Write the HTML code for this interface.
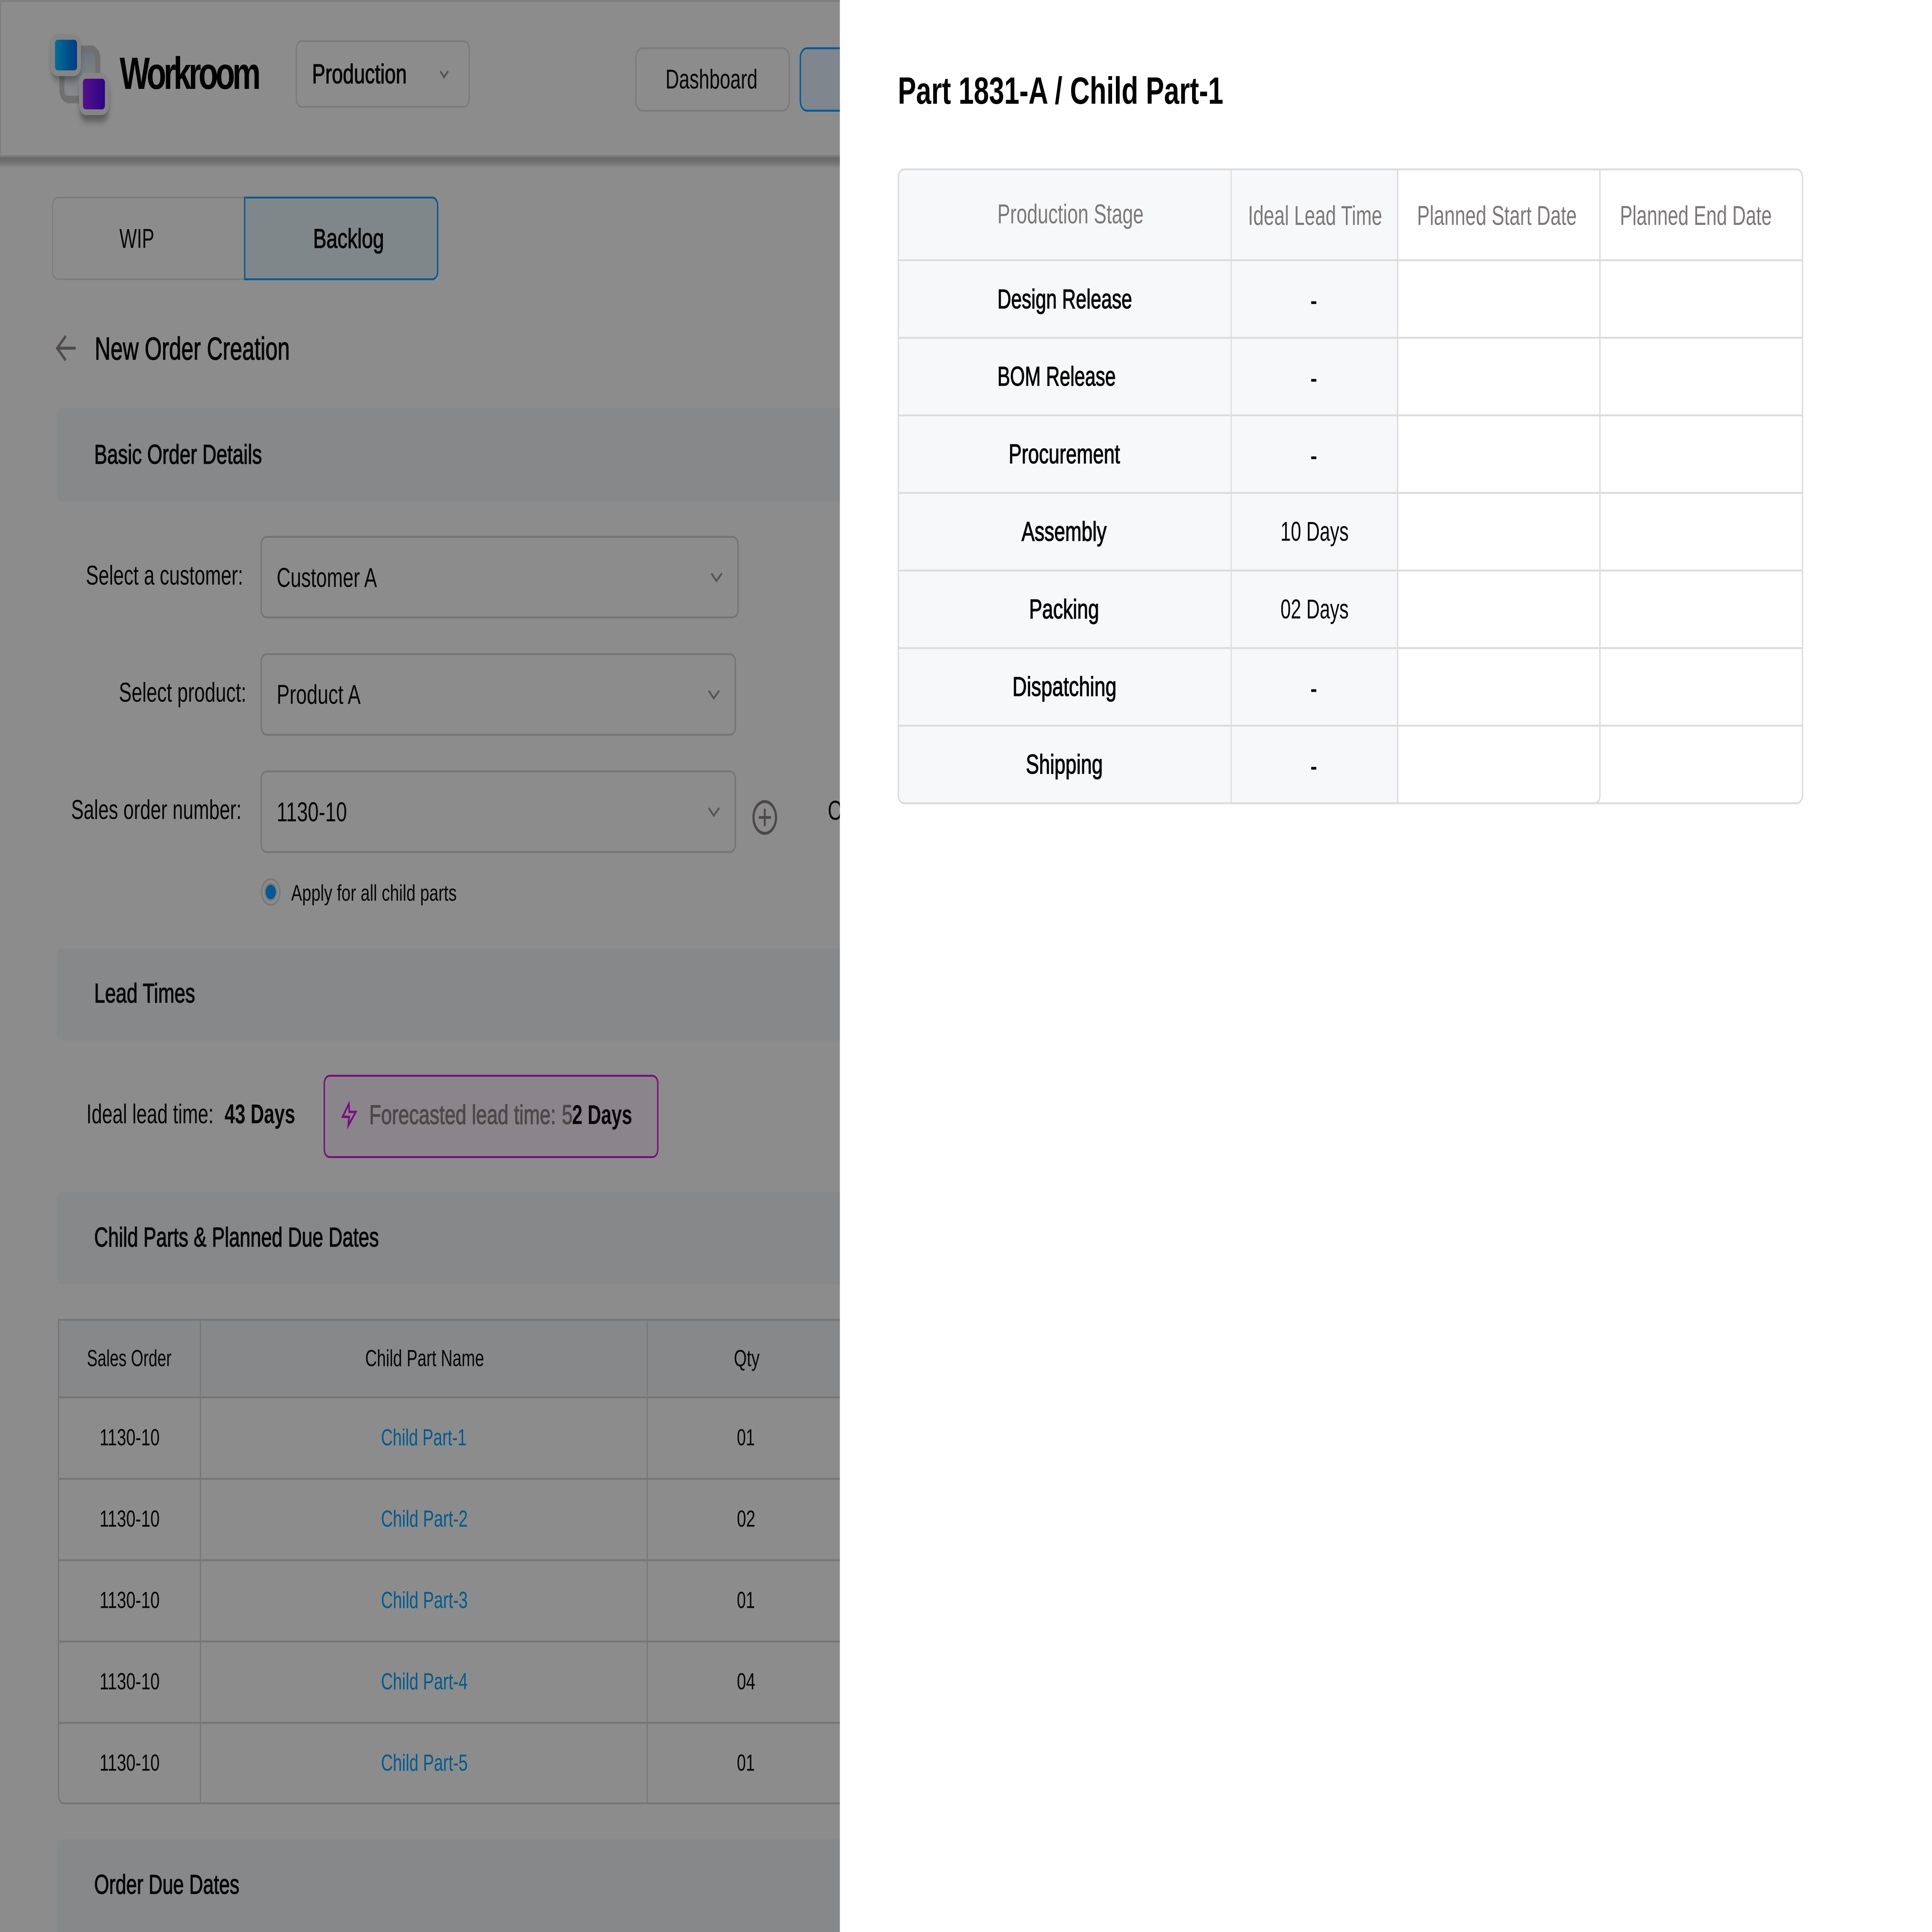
<!DOCTYPE html>
<html lang="en">
<head>
<meta charset="utf-8">
<title>Workroom - Part 1831-A / Child Part-1</title>
<style>
html,body{margin:0;padding:0;background:#fff;width:100%;height:100%;overflow:hidden}
svg{display:block;position:fixed;left:0;top:0;width:100vw;height:100vh}
text{font-family:"Liberation Sans",Arial,sans-serif;fill:#060606}
.m{stroke:#060606;stroke-width:1.6px}
.b{font-weight:700}
.lnk{fill:#005a8e}
.hd{fill:#7c7878}
.line{fill:#dcdcdc}
.gl{fill:#767676}
</style>
</head>
<body>
<svg xmlns="http://www.w3.org/2000/svg" viewBox="0 0 7200 5105" preserveAspectRatio="none">
<defs>
<linearGradient id="gBlue" x1="0" x2="1" y1="0" y2="0"><stop offset="0" stop-color="#006f97"/><stop offset="1" stop-color="#003a82"/></linearGradient>
<linearGradient id="gPur" x1="0" x2="1" y1="0" y2="0"><stop offset="0" stop-color="#55118a"/><stop offset="1" stop-color="#2e0288"/></linearGradient>
<linearGradient id="gBack" x1="0" x2="0" y1="0" y2="1"><stop offset="0" stop-color="#6f7580"/><stop offset="1" stop-color="#878a8d"/></linearGradient>
<linearGradient id="gShadow" x1="0" x2="0" y1="0" y2="1"><stop offset="0" stop-color="#6a6a6a"/><stop offset=".35" stop-color="#6e6e6e"/><stop offset="1" stop-color="#8c8c8c"/></linearGradient>
<filter id="blur" x="-50%" y="-50%" width="200%" height="200%"><feGaussianBlur stdDeviation="9"/></filter>
</defs>

<!-- dimmed page -->
<rect width="3130" height="5105" fill="#8c8c8c"/>

<!-- top bar -->
<rect x="0" y="415" width="3130" height="30" fill="url(#gShadow)"/>
<rect x="0" y="0" width="3130" height="5" fill="#7e7e7e"/>
<rect x="0" y="0" width="4" height="412" fill="#7e7e7e"/>
<rect x="0" y="410" width="3130" height="5" fill="#7b7b7b"/>

<!-- logo -->
<rect x="221" y="120" width="153" height="153" rx="35" fill="#707070"/>
<rect x="240" y="140" width="115" height="113" rx="13" fill="url(#gBack)"/>
<rect x="193" y="105" width="106" height="108" rx="26" fill="#000" opacity=".3" filter="url(#blur)"/>
<rect x="189" y="90" width="113" height="111" rx="27" fill="#858585"/>
<rect x="205" y="105" width="82" height="81" rx="10" fill="url(#gBlue)"/>
<rect x="298" y="215" width="106" height="106" rx="26" fill="#000" opacity=".35" filter="url(#blur)"/>
<rect x="294" y="193" width="112" height="111" rx="27" fill="#858585"/>
<rect x="309" y="208" width="82" height="81" rx="10" fill="url(#gPur)"/>
<text x="446" y="235" font-size="119" class="b" textLength="526" lengthAdjust="spacing" style="fill:#000">Workroom</text>

<!-- production select -->
<rect x="1104.5" y="108.5" width="644" height="174" rx="20" fill="none" stroke="#7c7c7c" stroke-width="5"/>
<text x="1163" y="220" font-size="72" textLength="353" lengthAdjust="spacingAndGlyphs" class="m">Production</text>
<polyline points="1641,188 1655,204 1670,188" fill="none" stroke="#555" stroke-width="6"/>

<!-- nav buttons -->
<rect x="2369.5" y="127.5" width="572" height="165" rx="25" fill="none" stroke="#7c7c7c" stroke-width="5"/>
<text x="2480" y="234" font-size="72" textLength="343" lengthAdjust="spacingAndGlyphs">Dashboard</text>
<rect x="2982.5" y="127.5" width="400" height="165" rx="25" fill="#7f868d" stroke="#005a96" stroke-width="5"/>

<!-- tabs -->
<rect x="196" y="522" width="800" height="216" rx="20" fill="none" stroke="#7c7c7c" stroke-width="4"/>
<path d="M912 522H1611a20 20 0 0 1 20 20V718a20 20 0 0 1 -20 20H912Z" fill="#80878b" stroke="#005a96" stroke-width="5"/>
<text x="445" y="655" font-size="72" textLength="130" lengthAdjust="spacingAndGlyphs">WIP</text>
<text x="1167" y="655" font-size="72" textLength="264" lengthAdjust="spacingAndGlyphs" class="m">Backlog</text>

<!-- back + title -->
<path d="M245 888L213 920L245 952M213 920H282" fill="none" stroke="#514c4c" stroke-width="8"/>
<text x="353" y="950" font-size="84" textLength="727" lengthAdjust="spacingAndGlyphs" class="m">New Order Creation</text>

<!-- Basic order details -->
<rect x="212" y="1078" width="3000" height="247" rx="16" fill="#86888a"/>
<text x="351" y="1225" font-size="72" textLength="625" lengthAdjust="spacingAndGlyphs" class="m">Basic Order Details</text>

<text x="320" y="1545" font-size="72" textLength="586" lengthAdjust="spacingAndGlyphs">Select a customer:</text>
<rect x="973.5" y="1418.5" width="1777" height="213" rx="20" fill="none" stroke="#757575" stroke-width="5"/>
<text x="1031" y="1551" font-size="72" textLength="374" lengthAdjust="spacingAndGlyphs">Customer A</text>
<polyline points="2651,1515 2670,1535 2690,1515" fill="none" stroke="#555" stroke-width="6"/>

<text x="443" y="1854" font-size="72" textLength="475" lengthAdjust="spacingAndGlyphs">Select product:</text>
<rect x="973.5" y="1728.5" width="1767" height="213" rx="20" fill="none" stroke="#757575" stroke-width="5"/>
<text x="1031" y="1860" font-size="72" textLength="313" lengthAdjust="spacingAndGlyphs">Product A</text>
<polyline points="2641,1825 2660,1845 2680,1825" fill="none" stroke="#555" stroke-width="6"/>

<text x="265" y="2164" font-size="72" textLength="635" lengthAdjust="spacingAndGlyphs">Sales order number:</text>
<rect x="973.5" y="2038.5" width="1767" height="213" rx="20" fill="none" stroke="#757575" stroke-width="5"/>
<text x="1031" y="2170" font-size="72" textLength="262" lengthAdjust="spacingAndGlyphs">1130-10</text>
<polyline points="2641,2135 2660,2155 2680,2135" fill="none" stroke="#555" stroke-width="6"/>

<circle cx="2850" cy="2160" r="42" fill="none" stroke="#4c4848" stroke-width="8"/>
<path d="M2828 2160H2873M2850 2137V2183" fill="none" stroke="#4c4848" stroke-width="7"/>
<text x="3085" y="2166" font-size="72">O</text>

<circle cx="1009" cy="2357" r="34" fill="none" stroke="#787878" stroke-width="5"/>
<circle cx="1009" cy="2357" r="24" fill="#787878"/>
<circle cx="1009" cy="2357" r="19" fill="#005a96"/>
<text x="1085" y="2380" font-size="60" textLength="617" lengthAdjust="spacingAndGlyphs">Apply for all child parts</text>

<!-- Lead times -->
<rect x="212" y="2506" width="3000" height="243" rx="16" fill="#86888a"/>
<text x="351" y="2649" font-size="72" textLength="376" lengthAdjust="spacingAndGlyphs" class="m">Lead Times</text>
<text x="322" y="2968" font-size="72" textLength="474" lengthAdjust="spacingAndGlyphs">Ideal lead time:</text>
<text x="837" y="2968" font-size="72" textLength="263" lengthAdjust="spacingAndGlyphs" class="b">43 Days</text>

<rect x="1208.5" y="2842.5" width="1243" height="215" rx="20" fill="#8a858a" stroke="#7b0a80" stroke-width="5"/>
<polygon points="1300,2917 1277,2951 1301,2951 1298,2974 1326,2938 1302,2938" fill="none" stroke="#7b0a80" stroke-width="6"/>
<text x="1376" y="2970" font-size="72" textLength="696" lengthAdjust="spacingAndGlyphs" style="fill:#4c4848;stroke:#4c4848;stroke-width:1.6px">Forecasted lead time:</text>
<text x="2094" y="2970" font-size="72" style="fill:#4c4848;stroke:#4c4848;stroke-width:1.6px">5</text>
<text x="2132" y="2970" font-size="72" textLength="224" lengthAdjust="spacingAndGlyphs" class="b">2 Days</text>

<!-- Child parts -->
<rect x="212" y="3150" width="3000" height="244" rx="16" fill="#86888a"/>
<text x="351" y="3294" font-size="72" textLength="1061" lengthAdjust="spacingAndGlyphs" class="m">Child Parts &amp; Planned Due Dates</text>

<rect x="218" y="3488" width="2950" height="204" fill="#86888a"/>
<rect x="216" y="3485" width="2950" height="5" class="gl"/>
<rect x="216" y="3690" width="2950" height="5" class="gl"/>
<rect x="216" y="3905" width="2950" height="5" class="gl"/>
<rect x="216" y="4120" width="2950" height="5" class="gl"/>
<rect x="216" y="4335" width="2950" height="5" class="gl"/>
<rect x="216" y="4550" width="2950" height="5" class="gl"/>
<path d="M218 3485V4745a20 20 0 0 0 20 20H3166" fill="none" stroke="#767676" stroke-width="5"/>
<rect x="745" y="3485" width="4" height="1280" class="gl"/>
<rect x="2410" y="3485" width="4" height="1280" class="gl"/>

<text x="324" y="3610" font-size="62" textLength="315" lengthAdjust="spacingAndGlyphs">Sales Order</text>
<text x="1361" y="3610" font-size="62" textLength="443" lengthAdjust="spacingAndGlyphs">Child Part Name</text>
<text x="2735" y="3610" font-size="62" textLength="96" lengthAdjust="spacingAndGlyphs">Qty</text>

<text x="371" y="3819" font-size="62" textLength="224" lengthAdjust="spacingAndGlyphs">1130-10</text>
<text x="1420" y="3819" font-size="62" textLength="319" lengthAdjust="spacingAndGlyphs" class="lnk">Child Part-1</text>
<text x="2746" y="3819" font-size="62" textLength="67" lengthAdjust="spacingAndGlyphs">01</text>

<text x="371" y="4034" font-size="62" textLength="224" lengthAdjust="spacingAndGlyphs">1130-10</text>
<text x="1420" y="4034" font-size="62" textLength="323" lengthAdjust="spacingAndGlyphs" class="lnk">Child Part-2</text>
<text x="2746" y="4034" font-size="62" textLength="69" lengthAdjust="spacingAndGlyphs">02</text>

<text x="371" y="4249" font-size="62" textLength="224" lengthAdjust="spacingAndGlyphs">1130-10</text>
<text x="1420" y="4249" font-size="62" textLength="323" lengthAdjust="spacingAndGlyphs" class="lnk">Child Part-3</text>
<text x="2746" y="4249" font-size="62" textLength="67" lengthAdjust="spacingAndGlyphs">01</text>

<text x="371" y="4464" font-size="62" textLength="224" lengthAdjust="spacingAndGlyphs">1130-10</text>
<text x="1420" y="4464" font-size="62" textLength="323" lengthAdjust="spacingAndGlyphs" class="lnk">Child Part-4</text>
<text x="2746" y="4464" font-size="62" textLength="69" lengthAdjust="spacingAndGlyphs">04</text>

<text x="371" y="4679" font-size="62" textLength="224" lengthAdjust="spacingAndGlyphs">1130-10</text>
<text x="1420" y="4679" font-size="62" textLength="323" lengthAdjust="spacingAndGlyphs" class="lnk">Child Part-5</text>
<text x="2746" y="4679" font-size="62" textLength="67" lengthAdjust="spacingAndGlyphs">01</text>

<!-- Order due dates -->
<path d="M212 5105V4876a16 16 0 0 1 16 -16H3130V5105Z" fill="#86888a"/>
<text x="351" y="5004" font-size="72" textLength="541" lengthAdjust="spacingAndGlyphs" class="m">Order Due Dates</text>

<!-- right drawer -->
<rect x="3130" y="0" width="4070" height="5105" fill="#fff"/>
<text x="3346" y="274" font-size="100" textLength="1213" lengthAdjust="spacingAndGlyphs" class="b" style="fill:#000">Part 1831-A / Child Part-1</text>

<path d="M3347 470a22 22 0 0 1 22 -22H5208V2122H3369a22 22 0 0 1 -22 -22Z" fill="#f7f8fa"/>
<rect x="3347" y="685" width="3371" height="5" class="line"/>
<rect x="3347" y="890" width="3371" height="5" class="line"/>
<rect x="3347" y="1095" width="3371" height="5" class="line"/>
<rect x="3347" y="1300" width="3371" height="5" class="line"/>
<rect x="3347" y="1505" width="3371" height="5" class="line"/>
<rect x="3347" y="1710" width="3371" height="5" class="line"/>
<rect x="3347" y="1915" width="3371" height="5" class="line"/>
<rect x="4586" y="447" width="4" height="1675" class="line"/>
<rect x="5206" y="447" width="5" height="1675" class="line"/>
<rect x="5960" y="447" width="5" height="1660" class="line"/>
<path d="M5962 2104a18 18 0 0 1 -18 18" fill="none" stroke="#dcdcdc" stroke-width="5"/>
<rect x="3347.5" y="447.5" width="3370" height="1675" rx="22" fill="none" stroke="#dcdcdc" stroke-width="5"/>

<text x="3717" y="590" font-size="72" textLength="545" lengthAdjust="spacingAndGlyphs" class="hd">Production Stage</text>
<text x="4651" y="594" font-size="72" textLength="500" lengthAdjust="spacingAndGlyphs" class="hd">Ideal Lead Time</text>
<text x="5281" y="594" font-size="72" textLength="595" lengthAdjust="spacingAndGlyphs" class="hd">Planned Start Date</text>
<text x="6037" y="594" font-size="72" textLength="566" lengthAdjust="spacingAndGlyphs" class="hd">Planned End Date</text>

<text x="3717" y="815" font-size="72" textLength="502" lengthAdjust="spacingAndGlyphs" class="m">Design Release</text>
<text x="4896" y="819" font-size="72" text-anchor="middle" class="m">-</text>
<text x="3717" y="1019" font-size="72" textLength="441" lengthAdjust="spacingAndGlyphs" class="m">BOM Release</text>
<text x="4896" y="1024" font-size="72" text-anchor="middle" class="m">-</text>
<text x="3759" y="1224" font-size="72" textLength="415" lengthAdjust="spacingAndGlyphs" class="m">Procurement</text>
<text x="4896" y="1229" font-size="72" text-anchor="middle" class="m">-</text>
<text x="3807" y="1429" font-size="72" textLength="317" lengthAdjust="spacingAndGlyphs" class="m">Assembly</text>
<text x="4772" y="1429" font-size="72" textLength="254" lengthAdjust="spacingAndGlyphs">10 Days</text>
<text x="3835" y="1634" font-size="72" textLength="261" lengthAdjust="spacingAndGlyphs" class="m">Packing</text>
<text x="4772" y="1634" font-size="72" textLength="254" lengthAdjust="spacingAndGlyphs">02 Days</text>
<text x="3773" y="1839" font-size="72" textLength="388" lengthAdjust="spacingAndGlyphs" class="m">Dispatching</text>
<text x="4896" y="1844" font-size="72" text-anchor="middle" class="m">-</text>
<text x="3823" y="2044" font-size="72" textLength="287" lengthAdjust="spacingAndGlyphs" class="m">Shipping</text>
<text x="4896" y="2049" font-size="72" text-anchor="middle" class="m">-</text>
</svg>
</body>
</html>
